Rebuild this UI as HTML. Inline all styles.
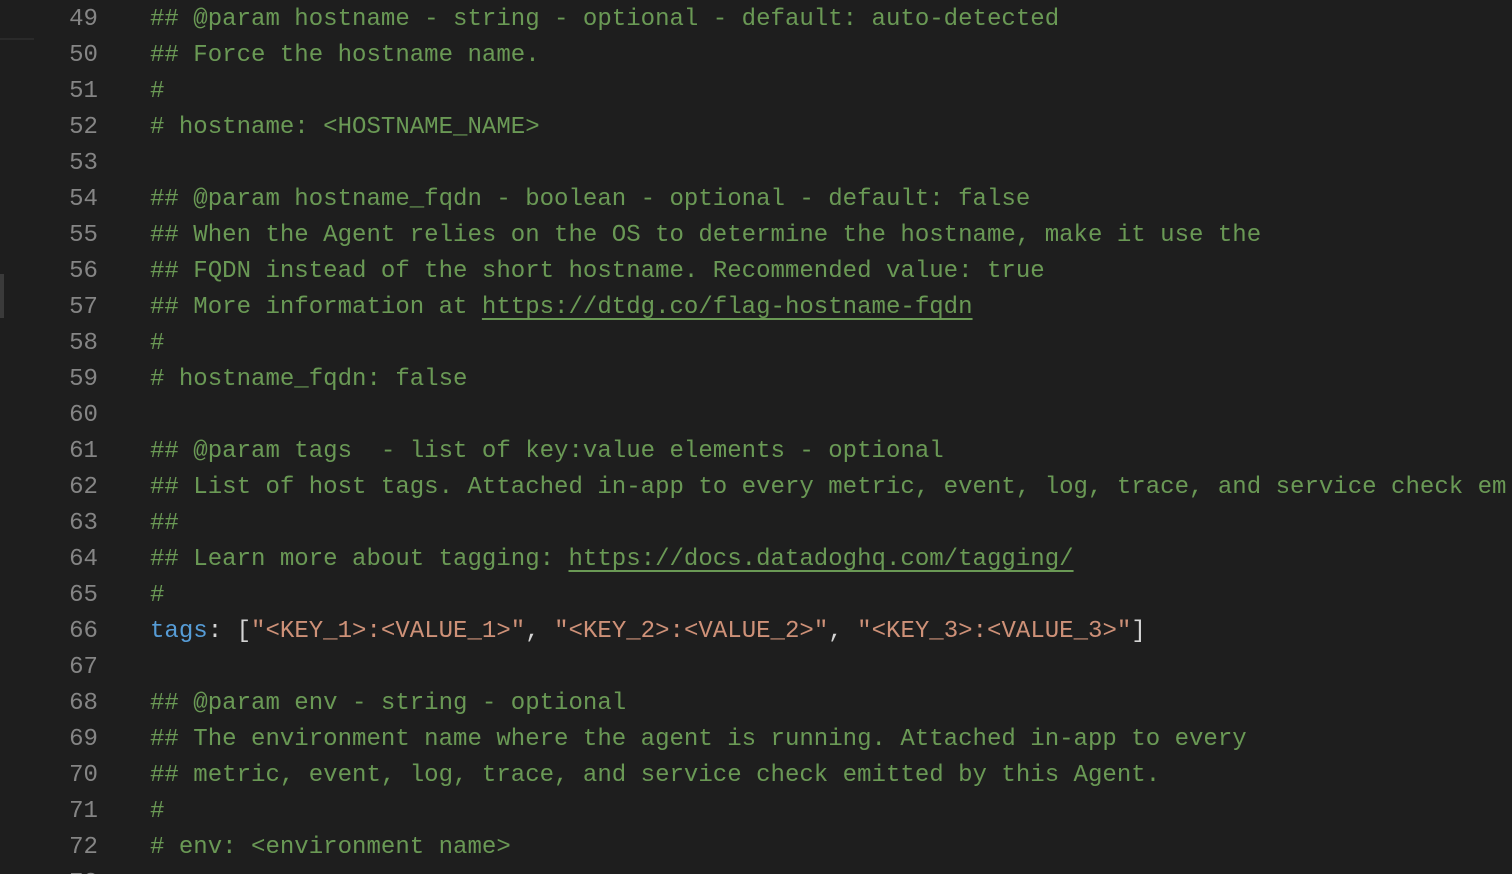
<!DOCTYPE html>
<html><head><style>
html,body{margin:0;background:#1e1e1e;width:1512px;height:874px;overflow:hidden}
body{font-family:"Liberation Mono",monospace;font-size:24.05px;position:relative}
.w{position:absolute;left:0;top:2px;width:1512px;overflow:hidden}
.l{height:36px;line-height:36px;white-space:pre;position:relative;overflow:hidden}
.n{position:absolute;left:0;width:98px;text-align:right;color:#858585}
.c{position:absolute;left:150px;color:#6a9955}
u{text-decoration:underline;text-underline-offset:5px}
.k{color:#569cd6}.s{color:#ce9178}.p{color:#d4d4d4}
.bar1{position:absolute;left:0;top:38px;width:34px;height:2px;background:#2a2a2a}
.bar2{position:absolute;left:0;top:274px;width:4px;height:44px;background:#3a3a3a}
</style></head><body>
<div class="bar1"></div><div class="bar2"></div>
<div class="w">
<div class="l"><span class="n">49</span><span class="c">## @param hostname - string - optional - default: auto-detected</span></div>
<div class="l"><span class="n">50</span><span class="c">## Force the hostname name.</span></div>
<div class="l"><span class="n">51</span><span class="c">#</span></div>
<div class="l"><span class="n">52</span><span class="c"># hostname: &lt;HOSTNAME_NAME&gt;</span></div>
<div class="l"><span class="n">53</span></div>
<div class="l"><span class="n">54</span><span class="c">## @param hostname_fqdn - boolean - optional - default: false</span></div>
<div class="l"><span class="n">55</span><span class="c">## When the Agent relies on the OS to determine the hostname, make it use the</span></div>
<div class="l"><span class="n">56</span><span class="c">## FQDN instead of the short hostname. Recommended value: true</span></div>
<div class="l"><span class="n">57</span><span class="c">## More information at <u>https://dtdg.co/flag-hostname-fqdn</u></span></div>
<div class="l"><span class="n">58</span><span class="c">#</span></div>
<div class="l"><span class="n">59</span><span class="c"># hostname_fqdn: false</span></div>
<div class="l"><span class="n">60</span></div>
<div class="l"><span class="n">61</span><span class="c">## @param tags  - list of key:value elements - optional</span></div>
<div class="l"><span class="n">62</span><span class="c">## List of host tags. Attached in-app to every metric, event, log, trace, and service check em</span></div>
<div class="l"><span class="n">63</span><span class="c">##</span></div>
<div class="l"><span class="n">64</span><span class="c">## Learn more about tagging: <u>https://docs.datadoghq.com/tagging/</u></span></div>
<div class="l"><span class="n">65</span><span class="c">#</span></div>
<div class="l"><span class="n">66</span><span class="c"><span class="k">tags</span><span class="p">: [</span><span class="s">"&lt;KEY_1&gt;:&lt;VALUE_1&gt;"</span><span class="p">, </span><span class="s">"&lt;KEY_2&gt;:&lt;VALUE_2&gt;"</span><span class="p">, </span><span class="s">"&lt;KEY_3&gt;:&lt;VALUE_3&gt;"</span><span class="p">]</span></span></div>
<div class="l"><span class="n">67</span></div>
<div class="l"><span class="n">68</span><span class="c">## @param env - string - optional</span></div>
<div class="l"><span class="n">69</span><span class="c">## The environment name where the agent is running. Attached in-app to every</span></div>
<div class="l"><span class="n">70</span><span class="c">## metric, event, log, trace, and service check emitted by this Agent.</span></div>
<div class="l"><span class="n">71</span><span class="c">#</span></div>
<div class="l"><span class="n">72</span><span class="c"># env: &lt;environment name&gt;</span></div>
<div class="l"><span class="n">73</span></div>
</div>
</body></html>
